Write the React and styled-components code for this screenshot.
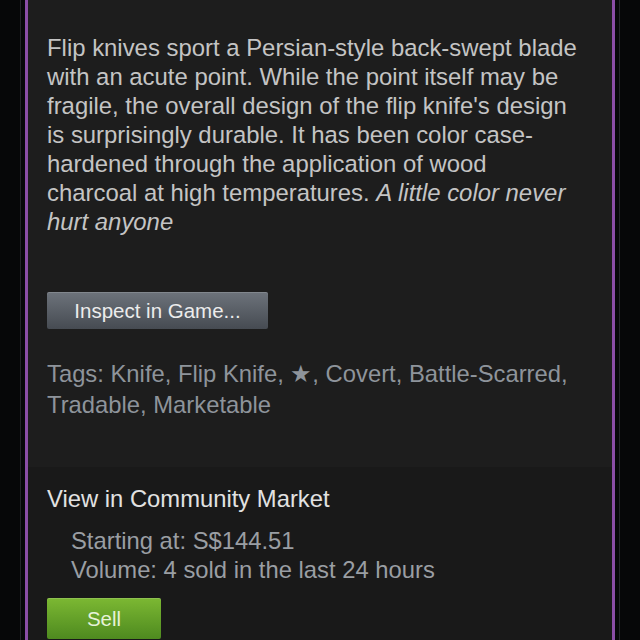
import styled, { createGlobalStyle } from "styled-components";

const Global = createGlobalStyle`
  html, body {
    margin: 0;
    padding: 0;
    background: #060708;
  }
  body {
    font-family: "Liberation Sans", Arial, sans-serif;
  }
`;

const Page = styled.div`
  width: 640px;
  height: 640px;
  overflow: hidden;
  display: flex;
  justify-content: center;
  background: #060708;
`;

const Stack = styled.div`
  width: 600px;
  height: 100%;
  padding: 0 2px;
  border-left: 1px solid #24262a;
  border-right: 1px solid #24262a;
  box-sizing: border-box;
  display: flex;
  justify-content: center;
`;

const Panel = styled.div`
  width: 590px;
  height: 100%;
  border-left: 3px solid #8a4ea6;
  border-right: 3px solid #8a4ea6;
  box-sizing: border-box;
  display: flex;
  flex-direction: column;
  background: #1d1d1d;
`;

const Details = styled.div`
  padding: 33px 19px 0 19px;
  height: 467px;
  box-sizing: border-box;
`;

const Description = styled.p`
  margin: 0;
  font-size: 23.9px;
  line-height: 29px;
  color: #c4c4c4;
  width: 532px;

  em {
    font-style: italic;
  }
`;

const Button = styled.button`
  display: block;
  border: none;
  border-radius: 2px;
  font-family: inherit;
  cursor: pointer;
  padding: 0;
  width: ${(p) => p.$width}px;
  height: ${(p) => p.$height}px;
  font-size: ${(p) => p.$size}px;
  color: ${(p) => p.$color};
  background: ${(p) => p.$bg};
  box-shadow: inset 0 1px 0 rgba(255, 255, 255, 0.15);
`;

const InspectButton = styled(Button)`
  margin-top: 56px;
`;

const Tags = styled.p`
  margin: 29px 0 0 0;
  font-size: 23.8px;
  line-height: 31px;
  color: #8e949b;
  width: 545px;
`;

const Market = styled.div`
  flex: 1;
  background: #191919;
  padding: 17px 19px 0 19px;
`;

const MarketTitle = styled.div`
  font-size: 23.8px;
  line-height: 30px;
  color: #e2e2e2;
`;

const MarketInfo = styled.div`
  margin-top: 12px;
  padding-left: 24px;
  font-size: 23.8px;
  line-height: 29px;
  color: #9a9ea3;
`;

const SellButton = styled(Button)`
  margin-top: 14px;
`;

export default function App() {
  return (
    <>
      <Global />
      <Page>
        <Stack>
          <Panel>
            <Details>
              <Description>
                Flip knives sport a Persian-style back-swept blade with an
                acute point. While the point itself may be fragile, the
                overall design of the flip knife's design is surprisingly
                durable. It has been color case-hardened through the
                application of wood charcoal at high temperatures.{" "}
                <em>A little color never hurt anyone</em>
              </Description>
              <InspectButton
                $width={221}
                $height={37}
                $size={20.5}
                $color="#ececec"
                $bg="linear-gradient(#6d737b, #464b52)"
              >
                Inspect in Game...
              </InspectButton>
              <Tags>
                Tags: Knife, Flip Knife, ★, Covert, Battle-Scarred, Tradable,
                Marketable
              </Tags>
            </Details>
            <Market>
              <MarketTitle>View in Community Market</MarketTitle>
              <MarketInfo>
                <div>Starting at: S$144.51</div>
                <div>Volume: 4 sold in the last 24 hours</div>
              </MarketInfo>
              <SellButton
                $width={114}
                $height={41}
                $size={20.5}
                $color="#e6f2d8"
                $bg="linear-gradient(#7cb833, #4e8a1f)"
              >
                Sell
              </SellButton>
            </Market>
          </Panel>
        </Stack>
      </Page>
    </>
  );
}
